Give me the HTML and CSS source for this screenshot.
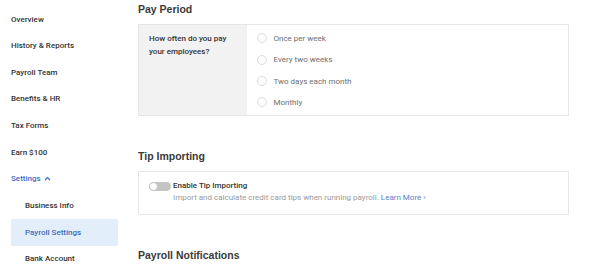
FILE: index.html
```html
<!DOCTYPE html>
<html lang="en">
<head>
  <meta charset="UTF-8" />
  <title>Payroll Settings</title>
  <meta name="viewport" content="width=device-width, initial-scale=1" />
  <link rel="stylesheet" href="styles.css">
</head>
<body>
  <div class="page">

    <!-- SIDEBAR -->
    <nav class="sidebar">
      <a class="nav-item">Overview</a>
      <a class="nav-item">History &amp; Reports</a>
      <a class="nav-item">Payroll Team</a>
      <a class="nav-item">Benefits &amp; HR</a>
      <a class="nav-item">Tax Forms</a>
      <a class="nav-item">Earn $100</a>
      <a class="nav-item open">Settings
        <svg class="chev" width="7" height="5" viewBox="0 0 7 5"><path d="M1 4 L3.5 1.5 L6 4" fill="none" stroke="currentColor" stroke-width="1.2"/></svg>
      </a>
      <div class="subnav">
        <a class="nav-item">Business Info</a>
        <a class="nav-item active">Payroll Settings</a>
        <a class="nav-item">Bank Account</a>
      </div>
    </nav>

    <!-- MAIN -->
    <main class="main">

      <section class="block">
        <h2>Pay Period</h2>
        <div class="card pay-card">
          <div class="question">How often do you pay your employees?</div>
          <div class="options">
            <label class="option"><span class="radio"></span>Once per week</label>
            <label class="option"><span class="radio"></span>Every two weeks</label>
            <label class="option"><span class="radio"></span>Two days each month</label>
            <label class="option"><span class="radio"></span>Monthly</label>
          </div>
        </div>
      </section>

      <section class="block">
        <h2>Tip Importing</h2>
        <div class="card tip-card">
          <span class="toggle"><span class="knob"></span></span>
          <div class="tip-text">
            <div class="tip-title">Enable Tip Importing</div>
            <div class="tip-desc">Import and calculate credit card tips when running payroll. <a class="link">Learn More ›</a></div>
          </div>
        </div>
      </section>

      <section class="block">
        <h2>Payroll Notifications</h2>
      </section>

    </main>
  </div>
</body>
</html>
```

FILE: styles.css
```css
body {
  margin: 0;
  background: #fff;
  font-family: Roboto, "Liberation Sans", Arial, sans-serif;
  color: #333;
}

.page {
  display: grid;
  grid-template-columns: 118px 431px;
  column-gap: 20px;
}

/* sidebar */
.sidebar {
  padding: 5.7px 0 0 11px;
}

.nav-item {
  display: flex;
  align-items: center;
  height: 26.67px;
  font-size: 8px;
  font-weight: 500;
  color: #333;
}

.nav-item.open {
  color: #3b6cbf;
}

.chev {
  margin-left: 3px;
}

.subnav .nav-item {
  padding-left: 14px;
}

.subnav .nav-item.active {
  background: #e3eefb;
  color: #3b6cbf;
}

/* main */
.main {
  padding-top: 2px;
}

.block {
  margin-bottom: 33px;
}

h2 {
  font-family: "Liberation Sans", Arial, sans-serif;
  font-size: 10.5px;
  line-height: 14px;
  font-weight: bold;
  color: #3a3a3a;
  margin: 0 0 8px;
}

.card {
  border: 1px solid #e6e6e6;
}

.pay-card {
  display: flex;
  height: 90px;
}

.question {
  width: 88px;
  padding: 6.5px 10px;
  background: #f2f2f2;
  font-size: 8px;
  font-weight: 500;
  line-height: 13px;
  color: #333;
}

.options {
  padding: 2.6px 0 0 9.5px;
}

.option {
  display: flex;
  align-items: center;
  height: 21.4px;
  font-size: 8px;
  color: #6e6e6e;
}

.radio {
  width: 8px;
  height: 8px;
  border: 1px solid #dcdcdc;
  border-radius: 50%;
  margin-right: 7px;
}

.tip-card {
  display: flex;
  align-items: flex-start;
  padding: 8px 10px 9px;
}

.toggle {
  position: relative;
  width: 22px;
  height: 9px;
  margin-top: 1.5px;
  margin-right: 2px;
  border-radius: 5px;
  background: #c4c4c4;
}

.knob {
  position: absolute;
  left: 0;
  top: 0;
  width: 7px;
  height: 7px;
  border: 1px solid #c4c4c4;
  border-radius: 50%;
  background: #fff;
}

.tip-title {
  font-size: 8px;
  font-weight: 500;
  line-height: 12px;
  color: #333;
}

.tip-desc {
  font-size: 8px;
  line-height: 12.5px;
  color: #9a9a9a;
}

.link {
  color: #5a82c8;
}
```
